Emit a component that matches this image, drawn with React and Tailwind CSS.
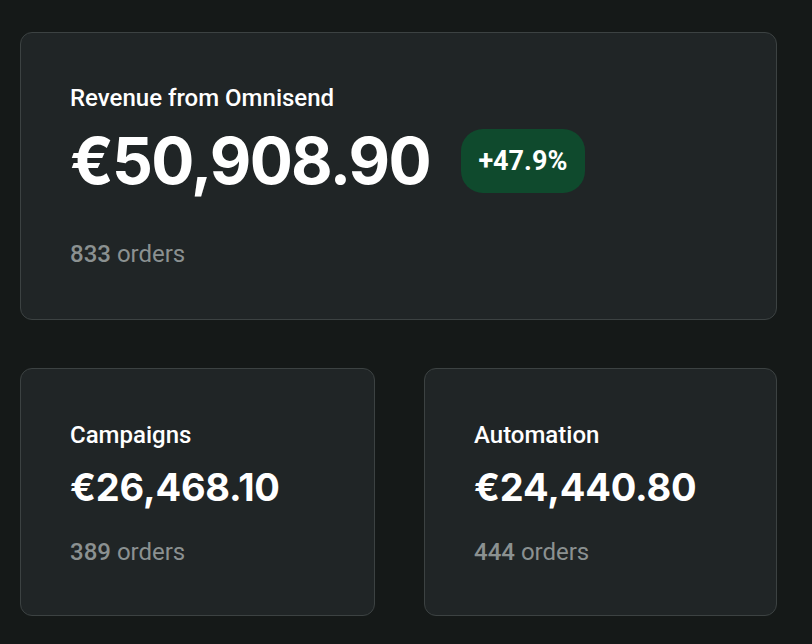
const StatCard = ({ title, amount, orders, big, badge }) => {
    return (
        <div className="rounded-[12px] border border-[#3c4242] bg-[#202526] pl-[49px] pr-6">
            <div className={`${big ? 'pt-[49px]' : 'pt-[50px]'} text-[24px] leading-[32px] font-medium text-white`}>{title}</div>
            {big ? (
                <div className="flex items-center gap-[31px] mt-[15px] h-[64px]">
                    <div className="font-['Inter'] font-bold text-[64px] leading-[64px] tracking-[-1.7px] text-white">{amount}</div>
                    {badge && (
                        <div className="flex items-center justify-center h-[64px] w-[124px] rounded-[22px] bg-[#0f4a2d] text-[27px] font-bold text-white">
                            {badge}
                        </div>
                    )}
                </div>
            ) : (
                <div className="mt-[14px] font-['Inter'] font-bold text-[38px] leading-[44px] tracking-[-0.2px] text-white">{amount}</div>
            )}
            <div className={`${big ? 'mt-[45px] pb-[49px]' : 'mt-[27px] pb-[47px]'} text-[24px] leading-[32px] text-[#8b9191]`}>
                <span className="font-medium">{orders}</span> orders
            </div>
        </div>
    );
};

const App = () => {
    return (
        <div className="min-h-[644px] w-[812px] bg-[#151918] pl-[20px] pr-[35px] pt-[32px] font-['Roboto',sans-serif]">
            <StatCard title="Revenue from Omnisend" amount="€50,908.90" orders="833" big badge="+47.9%" />
            <div className="grid grid-cols-[355px_353px] gap-[49px] mt-[48px]">
                <StatCard title="Campaigns" amount="€26,468.10" orders="389" />
                <StatCard title="Automation" amount="€24,440.80" orders="444" />
            </div>
        </div>
    );
};

export default App;
